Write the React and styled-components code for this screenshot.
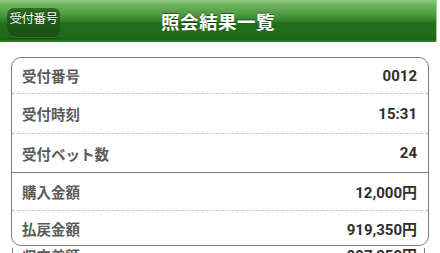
import React from "react";
import styled, { createGlobalStyle } from "styled-components";

const Global = createGlobalStyle`
  html, body { margin: 0; padding: 0; background: #ffffff; }
  body { font-family: "Roboto", "Noto Sans CJK JP", sans-serif; overflow: hidden; }
`;

const Page = styled.div`
  width: 440px;
  height: 253px;
  overflow: hidden;
  background: #fff;
`;

const Header = styled.header`
  position: relative;
  width: 436px;
  height: 42px;
  display: flex;
  align-items: center;
  justify-content: center;
  background: linear-gradient(
    to bottom,
    #8fc982 0%,
    #6cb35e 12%,
    #4c9a40 35%,
    #2f7f25 50%,
    #226f1b 55%,
    #206b19 88%,
    #1a5e15 93%,
    #3f8a35 100%
  );
  border-right: 1px solid #9fd494;
`;

const BackButton = styled.div`
  position: absolute;
  left: 7px;
  top: 8px;
  width: 53px;
  height: 30px;
  box-sizing: border-box;
  padding-top: 2px;
  border-radius: 7px 6px 6px 9px;
  background: linear-gradient(to bottom, #2a6e22 0%, #1d5a17 50%, #184f13 100%);
  box-shadow: inset 0 -1px 0 rgba(255, 255, 255, 0.18), 0 1px 0 rgba(0, 0, 0, 0.25);
  color: #fff;
  font-size: 12.5px;
  font-family: "Noto Sans CJK JP", sans-serif;
  letter-spacing: -0.5px;
  text-align: center;
  line-height: 15px;
  text-shadow: 0 -1px 0 rgba(0, 0, 0, 0.4);
`;

const Title = styled.h1`
  margin: 0;
  margin-top: -1px;
  color: #fff;
  font-family: "Noto Sans CJK JP", sans-serif;
  font-weight: 700;
  font-size: 18.5px;
  letter-spacing: 0.5px;
  text-shadow: 0 -1px 0 rgba(0, 0, 0, 0.45);
`;

const Card = styled.section`
  margin: 15px 11px 0 11px;
  width: 418px;
  box-sizing: border-box;
  border: 1.5px solid #7d7d7d;
  border-radius: 10px;
  background: #fff;
  overflow: hidden;
`;

const Row = styled.div`
  display: flex;
  align-items: center;
  justify-content: space-between;
  height: ${(p) => p.$h}px;
  padding: 0 11px 0 10px;
  border-bottom: ${(p) =>
    p.$line === "dotted"
      ? "1px dashed #c4c4c4"
      : p.$line === "solid"
      ? "1.5px solid #7d7d7d"
      : "none"};
`;

const Label = styled.span`
  font-family: "Noto Sans CJK JP", sans-serif;
  font-weight: 700;
  font-size: 14.5px;
  color: #5a5a5a;
`;

const Value = styled.span`
  font-family: "Roboto", "Noto Sans CJK JP", sans-serif;
  font-weight: 700;
  font-size: 15px;
  color: #2e2e2e;
`;

const Tail = styled.div`
  margin: 2px 15px 0 12px;
  height: 20px;
  line-height: 14px;
  border-left: 1.5px solid #7d7d7d;
  border-right: 1.5px solid #7d7d7d;
  display: flex;
  align-items: flex-start;
  justify-content: space-between;
  padding: 1px 7px 0 9px;
`;

const rows = [
  { label: "受付番号", value: "0012", h: 35, line: "dotted" },
  { label: "受付時刻", value: "15:31", h: 39, line: "dotted" },
  { label: "受付ベット数", value: "24", h: 38, line: "solid" },
  { label: "購入金額", value: "12,000円", h: 37, line: "dotted" },
  { label: "払戻金額", value: "919,350円", h: 34, line: "none" },
];

export default function App() {
  return (
    <Page>
      <Global />
      <Header>
        <BackButton>受付番号</BackButton>
        <Title>照会結果一覧</Title>
      </Header>
      <Card>
        {rows.map((r) => (
          <Row key={r.label} $h={r.h} $line={r.line}>
            <Label>{r.label}</Label>
            <Value>{r.value}</Value>
          </Row>
        ))}
      </Card>
      <Tail>
        <Label>収支差額</Label>
        <Value>907,350円</Value>
      </Tail>
    </Page>
  );
}
